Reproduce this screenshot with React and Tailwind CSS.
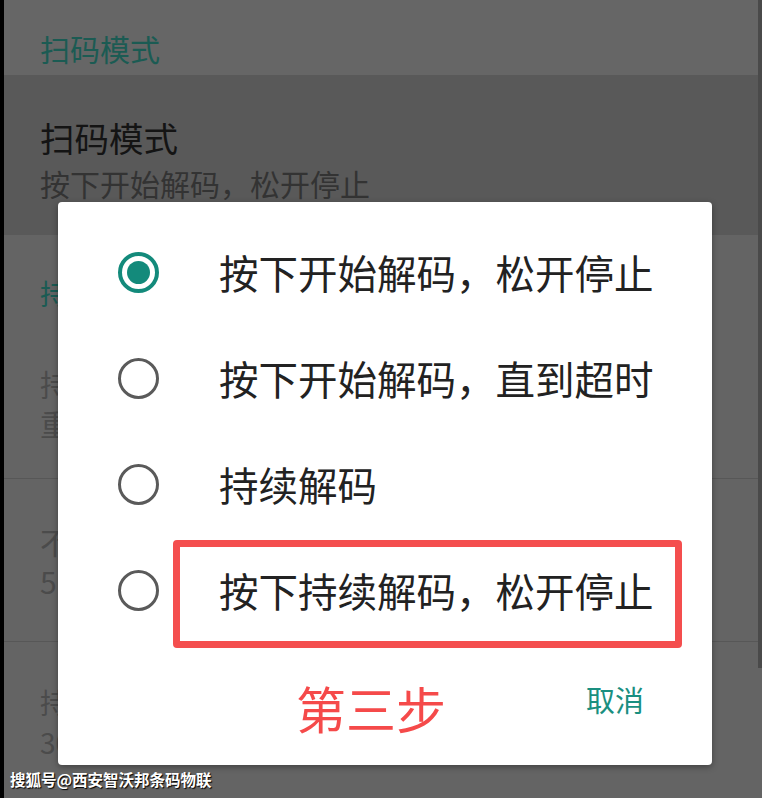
const FONT = { fontFamily: '"Noto Sans CJK SC", "Noto Sans", sans-serif' };

const options = [
  "按下开始解码，松开停止",
  "按下开始解码，直到超时",
  "持续解码",
  "按下持续解码，松开停止",
];

function Radio({ checked }) {
  if (checked) {
    return (
      <div className="w-[41px] h-[41px] rounded-full border-[4px] border-[#138a7b] flex items-center justify-center">
        <div className="w-[23px] h-[23px] rounded-full bg-[#138a7b]" />
      </div>
    );
  }
  return <div className="w-[41px] h-[41px] rounded-full border-[3.5px] border-[#5a5a5a]" />;
}

export default function App() {
  return (
    <div
      className="relative w-[762px] h-[798px] overflow-hidden bg-[#646464] border-l-[4px] border-black"
      style={FONT}
    >
      {/* background settings page */}
      <div className="h-[75px] bg-[#666666] pl-[36px] flex items-center pt-[20px]">
        <span className="text-[30px] leading-none text-[#1b5b53]">扫码模式</span>
      </div>
      <div className="h-[160px] bg-[#595959] pl-[36px] pt-[44px]">
        <div className="text-[34.5px] leading-[36px] text-[#141414]">扫码模式</div>
        <div className="text-[30px] leading-[32px] text-[#333333] mt-[12px]">按下开始解码，松开停止</div>
      </div>
      <div className="h-[100px] pl-[36px] flex items-center pt-[16px]">
        <span className="text-[28px] leading-none text-[#1b5b53]">持续解码</span>
      </div>
      <div className="h-[144px] pl-[36px] pt-[28px] border-b border-[#575757]">
        <div className="text-[30px] leading-[40px] text-[#4b4b4b]">持续解码超时</div>
        <div className="text-[30px] leading-[40px] text-[#4b4b4b]">重复解码间隔</div>
      </div>
      <div className="h-[163px] pl-[36px] pt-[42px] border-b border-[#575757]">
        <div className="text-[30px] leading-[40px] text-[#4b4b4b]">不同条码间隔</div>
        <div className="text-[30px] leading-[40px] text-[#4b4b4b]">500 毫秒</div>
      </div>
      <div className="pl-[36px] pt-[40px]">
        <div className="text-[28px] leading-[40px] text-[#4b4b4b]">持续解码时间</div>
        <div className="text-[28px] leading-[40px] text-[#4b4b4b]">3000 毫秒</div>
      </div>

      <div className="absolute right-0 top-0 w-[4px] h-[668px] bg-[#4a4a4a]" />

      {/* dialog */}
      <div className="absolute left-[54px] top-[202px] w-[654px] h-[563px] bg-white rounded-[4px] shadow-[0_2px_6px_rgba(0,0,0,0.35)]">
        <div className="pt-[17px]">
          {options.map((o, i) => (
            <div key={o} className="h-[106px] flex items-center pl-[60px]">
              <Radio checked={i === 0} />
              <span className="ml-[60px] text-[39.5px] leading-none text-[#222222]">{o}</span>
            </div>
          ))}
        </div>
        <div className="flex justify-end pr-[68px] mt-[42px]">
          <span className="text-[29px] leading-none text-[#1a8f80]">取消</span>
        </div>

        {/* annotations */}
        <div className="absolute left-[115px] top-[338px] w-[509px] h-[108px] border-[7px] border-[#f44e4e] rounded-[4px]" />
        <div className="absolute left-[238px] top-[480px] text-[50px] leading-none text-[#f54a4a]">第三步</div>
      </div>

      {/* watermark */}
      <div className="absolute left-[6px] top-[767px] text-[15.5px] leading-[24px] font-bold text-white [text-shadow:1px_1px_1px_#000]">
        搜狐号@西安智沃邦条码物联
      </div>
    </div>
  );
}
